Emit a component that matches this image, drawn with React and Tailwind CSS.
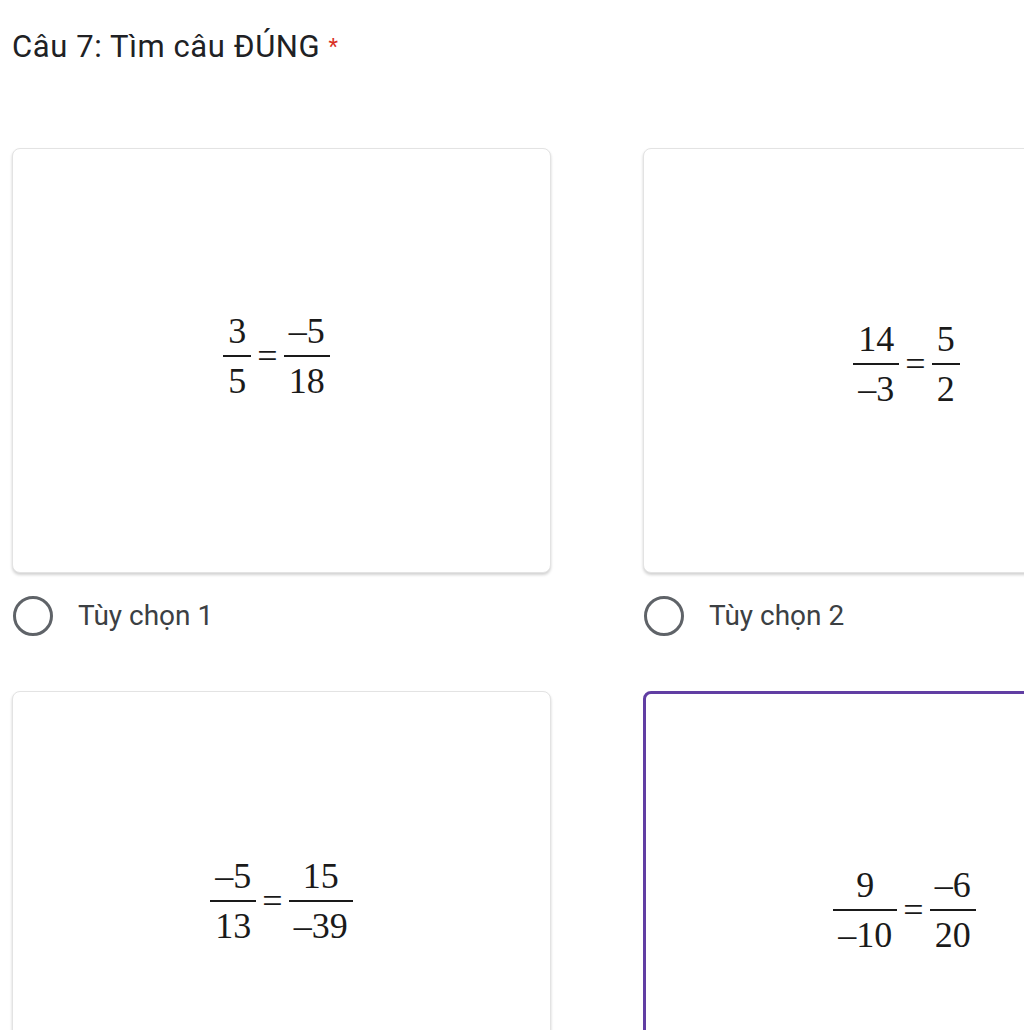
import React from "react";

function Frac({ top, bottom }) {
  return (
    <span className="inline-flex flex-col items-center">
      <span className="px-[5px] leading-none pb-[6px]">{top}</span>
      <span className="h-[2px] w-full bg-[#1a1a1a]"></span>
      <span className="px-[5px] leading-none pt-[6px]">{bottom}</span>
    </span>
  );
}

function Equation({ a, b, c, d }) {
  return (
    <div className="flex items-center font-['Liberation_Serif',serif] text-[36px] text-[#1a1a1a]">
      <Frac top={a} bottom={b} />
      <span className="mx-[6px] leading-none">=</span>
      <Frac top={c} bottom={d} />
    </div>
  );
}

function Option({ label, eq, selected, shift }) {
  return (
    <div className="flex flex-col">
      <div
        className={
          "h-[425px] rounded-[8px] bg-white flex items-center justify-center " +
          shift +
          (selected
            ? " border-[3px] border-[#613ea3]"
            : " border border-[#e3e3e3] shadow-[0_2px_3px_rgba(0,0,0,0.18)]")
        }
      >
        <Equation {...eq} />
      </div>
      {label && (
        <div className="mt-[23px] h-[40px] flex items-center">
          <span className="ml-[1px] w-[40px] h-[40px] rounded-full border-[3.5px] border-[#5f6368]"></span>
          <span className="ml-[25px] text-[28px] text-[#3c4043] font-['Roboto',sans-serif]">
            {label}
          </span>
        </div>
      )}
    </div>
  );
}

export default function App() {
  return (
    <div className="w-[1024px] h-[1030px] overflow-hidden bg-white font-['Roboto',sans-serif]">
      <div className="pl-[12px] pt-[30px] h-[64px] leading-[34px] text-[31px] tracking-[0.6px] text-[#202124] whitespace-nowrap">
        Câu 7: Tìm câu ĐÚNG <span className="text-[#d93025] text-[22px] align-top">*</span>
      </div>
      <div className="mt-[84px] pl-[12px] grid grid-cols-[539px_539px] gap-x-[92px] gap-y-[55px]">
        <Option
          label="Tùy chọn 1"
          shift="pr-[10px] pb-[10px]"
          eq={{ a: "3", b: "5", c: "–5", d: "18" }}
        />
        <Option
          label="Tùy chọn 2"
          shift="pr-[12px] pt-[6px]"
          eq={{ a: "14", b: "–3", c: "5", d: "2" }}
        />
        <Option
          eq={{ a: "–5", b: "13", c: "15", d: "–39" }}
          shift="pb-[6px]"
        />
        <Option
          selected
          shift="pr-[16px] pt-[12px]"
          eq={{ a: "9", b: "–10", c: "–6", d: "20" }}
        />
      </div>
    </div>
  );
}
